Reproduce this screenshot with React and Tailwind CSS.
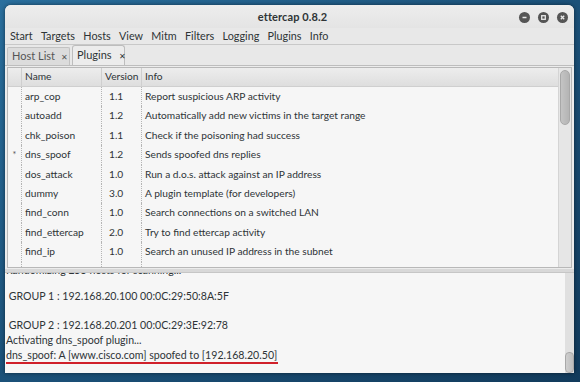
const plugins = [
  ["arp_cop", "1.1", "Report suspicious ARP activity", ""],
  ["autoadd", "1.2", "Automatically add new victims in the target range", ""],
  ["chk_poison", "1.1", "Check if the poisoning had success", ""],
  ["dns_spoof", "1.2", "Sends spoofed dns replies", "*"],
  ["dos_attack", "1.0", "Run a d.o.s. attack against an IP address", ""],
  ["dummy", "3.0", "A plugin template (for developers)", ""],
  ["find_conn", "1.0", "Search connections on a switched LAN", ""],
  ["find_ettercap", "2.0", "Try to find ettercap activity", ""],
  ["find_ip", "1.0", "Search an unused IP address in the subnet", ""],
];

const menus = ["Start", "Targets", "Hosts", "View", "Mitm", "Filters", "Logging", "Plugins", "Info"];

function WinButton({ kind }) {
  return (
    <div className="w-[11px] h-[11px] rounded-full bg-[#555555] flex items-center justify-center">
      <svg width="7" height="7" viewBox="0 0 7 7" fill="none" stroke="#e8e8e8" strokeWidth="1.3">
        {kind === "min" && <path d="M1.5 3.5h4" />}
        {kind === "max" && <rect x="1.7" y="1.7" width="3.6" height="3.6" />}
        {kind === "close" && <path d="M1.8 1.8l3.4 3.4M5.2 1.8l-3.4 3.4" />}
      </svg>
    </div>
  );
}

export default function App() {
  return (
    <div
      className="w-[580px] h-[382px] overflow-hidden pt-[5px] pl-[5px] bg-gradient-to-br from-[#2a6f9e] via-[#1b5179] to-[#123b5c]"
      style={{ fontFamily: 'Lato, "Open Sans", sans-serif' }}
    >
      <div className="w-[569px] h-[368px] flex flex-col rounded-t-[6px] bg-[#e8e8e8] shadow-[0_0_4px_rgba(0,0,0,0.5)] overflow-hidden text-[#2e3436]">
        {/* title bar */}
        <div className="h-[23px] shrink-0 grid grid-cols-[1fr_auto_1fr] items-center bg-gradient-to-b from-[#ededed] to-[#e4e4e4]">
          <div />
          <div className="text-[11px] font-bold pt-[2px] pl-[6px] tracking-[0.1px]">ettercap 0.8.2</div>
          <div className="flex justify-end gap-[8px] pr-[6px] pt-[1px]">
            <WinButton kind="min" />
            <WinButton kind="max" />
            <WinButton kind="close" />
          </div>
        </div>

        {/* menu bar */}
        <div className="h-[17px] shrink-0 flex items-center gap-[8.3px] pl-[5px] text-[10.8px] border-b border-[#c8c8c8]">
          {menus.map(m => <span key={m}>{m}</span>)}
        </div>

        {/* tabs */}
        <div className="h-[20px] shrink-0 flex items-end pl-[2px] pt-[1px] text-[11px] whitespace-nowrap">
          <div className="h-[18px] w-[63px] flex items-center pl-[4px] gap-[6px] text-[#555] bg-[#dcdcdc] border border-[#c2c2c2] border-b-0 rounded-t-[2px]">
            Host List <span className="text-[8px]">✕</span>
          </div>
          <div className="h-[20px] w-[53px] ml-[2px] flex items-center pl-[4px] gap-[7px] bg-[#ececec] border border-[#bdbdbd] border-b-0 rounded-t-[3px]">
            Plugins <span className="text-[8px]">✕</span>
          </div>
        </div>

        {/* notebook page with list */}
        <div className="h-[204px] shrink-0 border-t border-[#bdbdbd] bg-[#ececec] pl-[2px] pr-[2px] pt-[1px]">
          <div className="h-[201px] border border-[#b8b8b8] bg-[#f6f6f6] flex">
            <div className="flex-1 flex flex-col text-[10.2px] whitespace-nowrap">
              <div className="h-[19px] flex items-stretch bg-gradient-to-b from-[#ededed] to-[#dedede] border-b border-[#cfcfcf]">
                <div className="w-[14px] border-r border-[#cfcfcf]" />
                <div className="w-[80px] border-r border-[#cfcfcf] pl-[3px] flex items-center">Name</div>
                <div className="w-[40px] border-r border-[#cfcfcf] pl-[3px] flex items-center">Version</div>
                <div className="flex-1 pl-[3px] flex items-center">Info</div>
              </div>
              <div className="flex-1 flex flex-col">
                {plugins.map(([n, v, info, star]) => (
                  <div key={n} className="h-[19.4px] flex items-stretch">
                    <div className="w-[14px] border-r border-dotted border-[#b5b5b5] text-[#555] flex items-center justify-center text-[9px]">{star}</div>
                    <div className="w-[80px] border-r border-dotted border-[#b5b5b5] pl-[3px] flex items-center">{n}</div>
                    <div className="w-[40px] border-r border-dotted border-[#b5b5b5] pl-[7px] flex items-center">{v}</div>
                    <div className="flex-1 pl-[3px] flex items-center">{info}</div>
                  </div>
                ))}
                <div className="flex-1 flex">
                  <div className="w-[14px] border-r border-dotted border-[#b5b5b5]" />
                  <div className="w-[80px] border-r border-dotted border-[#b5b5b5]" />
                  <div className="w-[40px] border-r border-dotted border-[#b5b5b5]" />
                </div>
              </div>
            </div>
            <div className="w-[13px] bg-[#e6e6e6] border-l border-[#d4d4d4] flex justify-center pt-[2px]">
              <div className="w-[10px] h-[55px] rounded-[5px] bg-gradient-to-r from-[#c4c4c4] to-[#b4b4b4] border border-[#a8a8a8]" />
            </div>
          </div>
        </div>

        {/* paned handle */}
        <div className="h-[4px] shrink-0 bg-[#d8d8d8] border-b border-[#c6c6c6]" />

        {/* log text view */}
        <div className="flex-1 flex bg-[#f6f6f6] overflow-hidden">
          <div className="flex-1 overflow-hidden pl-[1px] text-[10.6px] leading-[14.7px] text-[#2e3436] whitespace-pre">
            <div className="-mt-[10px] h-[15px]">Randomizing 255 hosts for scanning...</div>
            <div className="mt-[11px]"> GROUP 1 : 192.168.20.100 00:0C:29:50:8A:5F</div>
            <div className="h-[14.7px]" />
            <div> GROUP 2 : 192.168.20.201 00:0C:29:3E:92:78</div>
            <div>Activating dns_spoof plugin...</div>
            <div>
              <span className="inline-block border-b-2 border-[#d0202a] pr-[1px] leading-[13px]">dns_spoof: A [www.cisco.com] spoofed to [192.168.20.50]</span>
            </div>
          </div>
          <div className="w-[9px] bg-[#e0e0e0] flex flex-col justify-end">
            <div className="h-[21px] rounded-[4px] bg-gradient-to-r from-[#cfcfcf] to-[#bdbdbd] border border-[#a8a8a8]" />
          </div>
        </div>
      </div>
    </div>
  );
}
